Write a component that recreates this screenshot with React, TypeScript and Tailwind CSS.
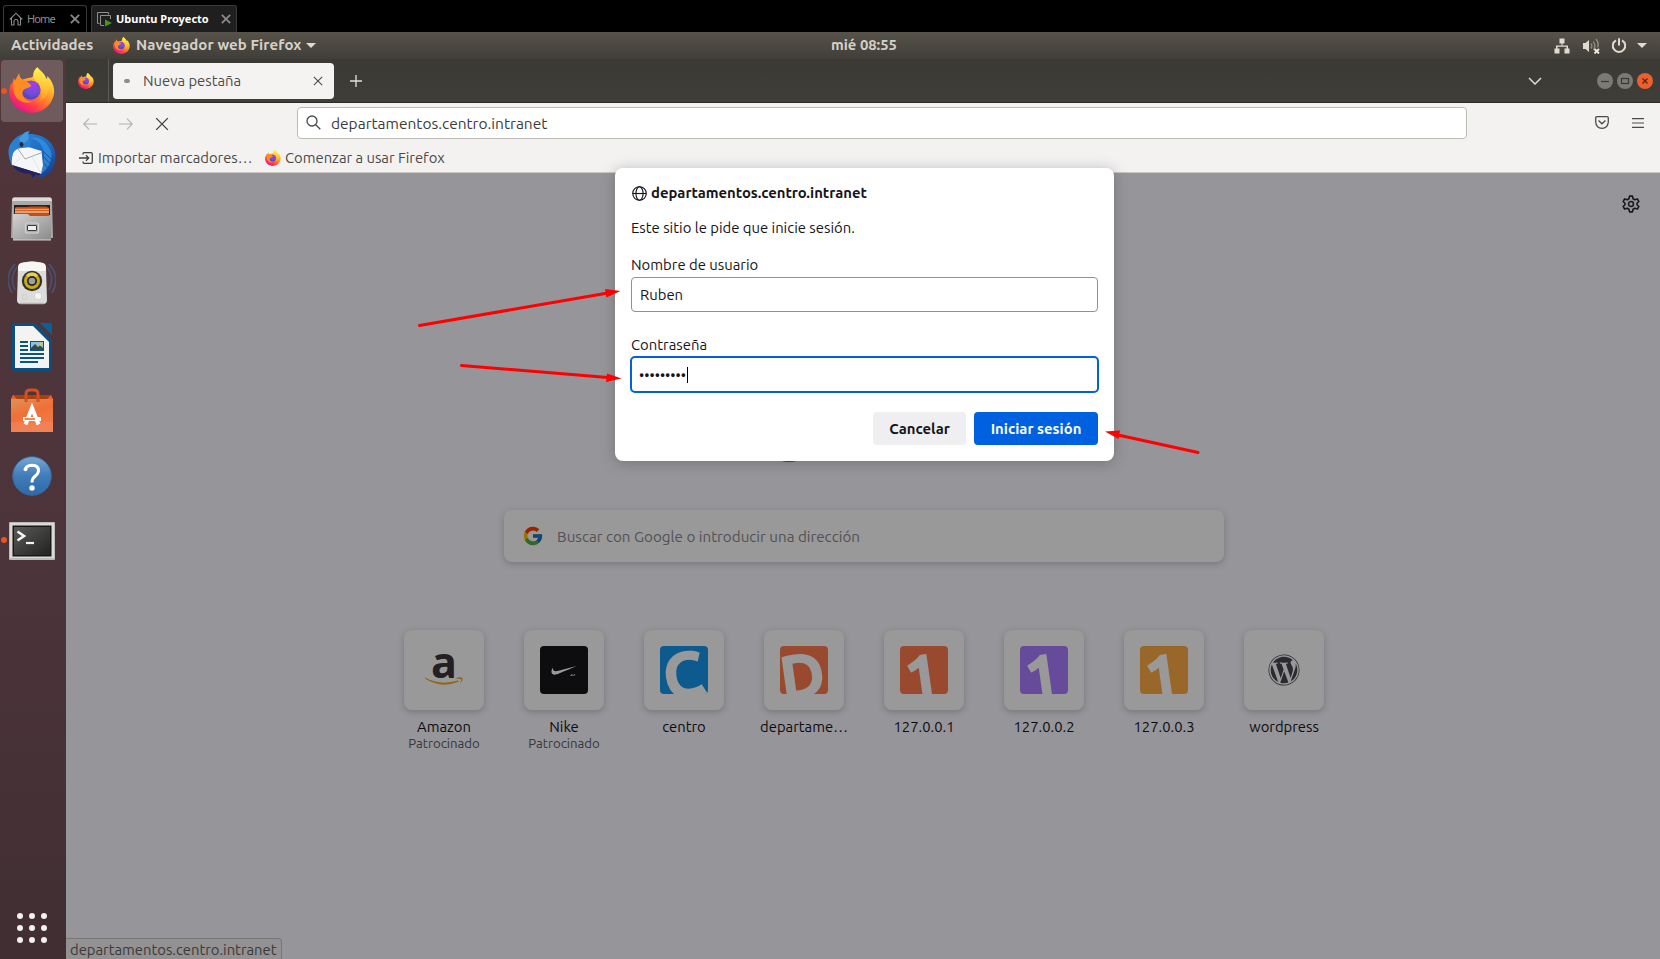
import React from "react";
import { FaWordpress } from "react-icons/fa";
import { FcGoogle } from "react-icons/fc";

function FirefoxLogo({ className, id }: { className: string; id: string }) {
  return (
    <svg viewBox="0 0 46 46" className={className}>
      <defs>
        <linearGradient id={id + "b"} x1="0.85" y1="0.1" x2="0.25" y2="0.95">
          <stop offset="0" stopColor="#fff04a" />
          <stop offset="0.3" stopColor="#ffb52e" />
          <stop offset="0.55" stopColor="#ff7a2c" />
          <stop offset="0.8" stopColor="#ff3750" />
          <stop offset="1" stopColor="#e8158c" />
        </linearGradient>
        <radialGradient id={id + "g"} cx="0.6" cy="0.25" r="0.8">
          <stop offset="0" stopColor="#a83be8" />
          <stop offset="0.6" stopColor="#6a50d8" />
          <stop offset="1" stopColor="#4a3fb0" />
        </radialGradient>
        <linearGradient id={id + "f"} x1="0.5" y1="0" x2="0.5" y2="1">
          <stop offset="0" stopColor="#fff250" />
          <stop offset="1" stopColor="#ffb02e" stopOpacity="0.4" />
        </linearGradient>
      </defs>
      <path
        d="M28.300 .3C31 4 35.500 5.500 37.500 12.500C38 11 38.500 10.500 38.300 9C42 12.500 45.200 18 45.200 24.500C44.500 37 34.500 45.800 22.500 45.800C10 45.800 .5 36.500 .2 24.500C.2 20.500 1.500 17.500 2.500 15.500L2.500 18L5 10.700L6 13.500C7.500 11.500 8.500 9 10.200 6.300C10.200 9.500 11.500 11.500 13.500 12.500C18 10.500 25 11.500 24 8C24.500 4.500 26 2 28.300 .3Z"
        fill={`url(#${id}b)`}
      />
      <path d="M28.300 .3C32 5 37 8 39.500 17C41 26 36 33 30 34C34 28 33 20 28 15C24 12 23.500 5 28.300 .3Z" fill={`url(#${id}f)`} />
      <circle cx="22" cy="23" r="9.600" fill={`url(#${id}g)`} />
      <path
        d="M5.500 13.500C9 12 12 12 14.500 13.500C17.500 14 20 16 22.500 18.500C21 20.500 18 21 16 22C13.500 23 13.500 25.500 13.500 27.500C14.500 32 19 35 24 34C18 38 8 35 5 26C4 21 4 17 5.500 13.500Z"
        fill="#ff8c22"
      />
    </svg>
  );
}

function Thunderbird() {
  return (
    <svg viewBox="0 0 48 48" className="size-12">
      <defs>
        <linearGradient id="tb" x1="0.2" y1="0" x2="0.8" y2="1">
          <stop offset="0" stopColor="#2f86d6" />
          <stop offset="0.5" stopColor="#1c6bc4" />
          <stop offset="1" stopColor="#173f96" />
        </linearGradient>
      </defs>
      <path d="M1 17C3 10 9 5 15 3C18 0 20 0 21.500 .8L19.500 3C36 2 47.500 12 47.500 25C47.500 37 41 44 32 47L29 43.500L25 47.500L24 43L5 36C1 30 0 23 1 17Z" fill="url(#tb)" />
      <path d="M22 7C33 9 39 19 35 33L33 43C40 38 44 31 43.500 22C40 11 31 5 22 7Z" fill="#3b9ae0" opacity="0.65" />
      <path d="M6 14L22 16.500L33.500 20L35 34L33 43L4 34C3 28 5 20 8 15Z" fill="#f6f6f8" />
      <path d="M8 15L17 28L34 21.500" fill="none" stroke="#a8a8ae" strokeWidth="1" />
      <path d="M4 34L13 27M33 42L24 26" stroke="#e0e0e4" strokeWidth="0.8" />
      <path d="M1 17C3 10 10 5 16 3C22 6 26 12 21 16C15 18 9 15 4.500 23C4 26 4 29 3 31C1 26 0 22 1 17Z" fill="#2a7fd0" />
      <path d="M21.500 .8C18 .2 14 3 11 8L14 14C18 11 23 8 20 3Z" fill="#3f9adf" />
      <path d="M4 34L33 43L31 44.500L28 43.500L25 47L23 43L15 42C10 40 6 38 4 34Z" fill="#25205e" />
      <ellipse cx="13.500" cy="13.500" rx="2" ry="2.400" fill="#2b2b38" />
      <path d="M35 20L46 31M36 26L45 36M36 32L42 40" stroke="#174c9c" strokeWidth="0.9" />
    </svg>
  );
}

function Files() {
  return (
    <svg viewBox="0 0 48 48" className="size-12">
      <defs>
        <linearGradient id="fl" x1="0" y1="0" x2="1" y2="1">
          <stop offset="0" stopColor="#d2d2d2" />
          <stop offset="1" stopColor="#8a8a8a" />
        </linearGradient>
      </defs>
      <path d="M4 5Q4 2 7 2H41Q44 2 44 5L45 43H3Z" fill="#a9a9a9" />
      <path d="M5 3H43L44 6H4Z" fill="#dcdcdc" />
      <path d="M6 10H42V20H6Z" fill="#2d211e" />
      <path d="M8 12H20L22 11.500H38L41 13V21H7V13Z" fill="#c34e14" />
      <path d="M7 14.500H41" stroke="#ff9c52" strokeWidth="1.300" />
      <path d="M7 17H41" stroke="#fff0df" strokeWidth="1" />
      <path d="M5 19H20L22 21H43V45H5Z" fill="url(#fl)" />
      <path d="M5 45H43" stroke="#d0d0d0" strokeWidth="1" />
      <rect x="17.500" y="28" width="13" height="10" rx="2" fill="#aaa" stroke="#d5d5d5" strokeWidth="1.200" />
      <rect x="19.500" y="30.500" width="9" height="5" rx="0.500" fill="#eee" stroke="#3c3c3c" strokeWidth="1" />
    </svg>
  );
}

function Rhythmbox() {
  return (
    <svg viewBox="0 0 48 48" className="size-12">
      <g fill="none" stroke="#49618f" strokeWidth="2" opacity="0.55">
        <path d="M7 4Q-5 17 4 33" />
        <path d="M9 7Q1 18 7 30" />
        <path d="M41 4Q53 17 44 33" />
        <path d="M39 7Q47 18 41 30" />
      </g>
      <path d="M13 3Q24 0 35 3Q38 4 38 8L39 40Q39 44 35 44H13Q9 44 9 40L10 8Q10 4 13 3Z" fill="#dcdcda" />
      <path d="M13 3Q24 0 35 3Q38 4 38 8V11H10V8Q10 4 13 3Z" fill="#f6f6f4" />
      <circle cx="24" cy="21" r="10.200" fill="#35322c" />
      <circle cx="24" cy="21" r="8" fill="#c9a716" />
      <path d="M18 15A8 8 0 0 1 30 15L24 21Z" fill="#e8d04a" />
      <circle cx="24" cy="21" r="5" fill="#222" />
      <circle cx="24" cy="21" r="3.300" fill="#9aa0a4" />
      <circle cx="30" cy="36" r="3.700" fill="#f4f4f4" stroke="#c4c4c4" strokeWidth="0.600" />
      <circle cx="16.500" cy="37" r="2.500" fill="none" stroke="#c8c8c8" strokeWidth="0.800" />
      <path d="M12 43.500H36" stroke="#b5b5b2" strokeWidth="1.500" />
    </svg>
  );
}

function Writer() {
  return (
    <svg viewBox="0 0 48 48" className="mb-px size-12">
      <path d="M6 0H27L44 17V46Q44 48 42 48H6Q4 48 4 46V2Q4 0 6 0Z" fill="#0a4f80" />
      <path d="M32 0H42Q44 0 44 2V12Z" fill="#0b609c" />
      <path d="M7 3H25L41 19V45H7Z" fill="#f3f3f2" />
      <g fill="#0a5384">
        <path d="M12 18H20V20H12ZM12 22H20V24H12ZM12 26H20V28H12ZM12 30H36V32H12ZM12 34H36V36H12ZM12 38H30V40H12Z" />
        <path d="M22 18H36V28H22Z" />
      </g>
      <path d="M23 19H35V27H23Z" fill="#8fc0dc" />
      <path d="M23 25L27 21L30 24L32 22.500L35 25V27H23Z" fill="#334a50" />
      <circle cx="33" cy="21" r="1.700" fill="#e7c547" />
    </svg>
  );
}

function Software() {
  return (
    <svg viewBox="0 0 48 48" className="mb-[2px] size-12">
      <defs>
        <linearGradient id="sw" x1="0" y1="0" x2="0.4" y2="1">
          <stop offset="0" stopColor="#e0905a" />
          <stop offset="0.5" stopColor="#ef7036" />
          <stop offset="1" stopColor="#f07c4c" />
        </linearGradient>
      </defs>
      <path d="M5 8H43L45 12H3Z" fill="#a8400f" />
      <path d="M5 8L9 12H3ZM43 8L39 12H45Z" fill="#e8602a" />
      <path d="M3 12H45V45H3Z" fill="url(#sw)" />
      <path d="M3 35H45V45H3Z" fill="#f58a60" opacity="0.45" />
      <path d="M18 15V7Q18 3 22 3H26Q30 3 30 7V15" fill="none" stroke="#d64f1d" strokeWidth="3" />
      <path d="M17.500 37.500L24 21L30.500 37.500" fill="none" stroke="#fff" strokeWidth="4" />
      <path d="M15 30H33V34H15Z" fill="#fff" />
      <path d="M16.500 31.200H27V32.800H16.500Z" fill="#ef6c22" />
    </svg>
  );
}

function Help() {
  return (
    <svg viewBox="0 0 48 48" className="size-12">
      <defs>
        <linearGradient id="hp" x1="0" y1="0" x2="0" y2="1">
          <stop offset="0" stopColor="#76a7d4" />
          <stop offset="0.5" stopColor="#3f7cb8" />
          <stop offset="1" stopColor="#2e6aa8" />
        </linearGradient>
      </defs>
      <circle cx="24" cy="24" r="19.300" fill="url(#hp)" stroke="#346ba2" strokeWidth="1" />
      <path d="M17.500 18Q17.500 13.500 24 13.300Q30.500 13.500 30.500 18.500Q30.500 21.500 27 24.200Q24 26.500 24 30.500" fill="none" stroke="#fff" strokeWidth="3" />
      <circle cx="17.500" cy="17.300" r="1.900" fill="#fff" />
      <circle cx="24" cy="36" r="2.700" fill="#fff" />
    </svg>
  );
}

function Terminal() {
  return (
    <svg viewBox="0 0 48 48" className="mt-px size-12">
      <defs>
        <linearGradient id="tm" x1="0" y1="0" x2="1" y2="1">
          <stop offset="0" stopColor="#5a5a58" />
          <stop offset="1" stopColor="#222" />
        </linearGradient>
      </defs>
      <rect x="1" y="5" width="46" height="38" rx="1" fill="#b9bbb8" />
      <rect x="2" y="6" width="44" height="35" fill="#dadbd8" />
      <rect x="4.500" y="8.500" width="39" height="31" fill="#181818" />
      <rect x="6" y="10" width="36" height="28" fill="url(#tm)" />
      <path d="M9.500 14.500L16 19L9.500 23.500" fill="none" stroke="#f4f4f4" strokeWidth="2.600" />
      <path d="M18 26H26" stroke="#f4f4f4" strokeWidth="2.200" />
    </svg>
  );
}

function CloseX({ className, w = 1 }: { className: string; w?: number }) {
  return (
    <svg viewBox="0 0 12 12" className={className} fill="none" stroke="currentColor" strokeWidth={w}>
      <path d="M1 1L11 11M11 1L1 11" />
    </svg>
  );
}

function VmTabs() {
  return (
    <div className="flex h-8 shrink-0 items-end gap-1 bg-black pl-[3px] font-['Noto_Sans',sans-serif]">
      <div className="flex h-[27px] w-[84px] items-center rounded-t-[3px] border border-b-0 border-[#3a3a3a] bg-black pl-[5px] text-[#8c8c8c]">
        <svg viewBox="0 0 14 14" className="size-[14px]" fill="none" stroke="#8a8a8a" strokeWidth="1.1">
          <path d="M.7 7.500L7 1.200L13.300 7.500M2.500 6V13H5V9Q5 7.500 7 7.500Q9 7.500 9 9V13H11.500V6" />
        </svg>
        <span className="ml-1 w-[43px] whitespace-nowrap text-[11px] tracking-[-0.9px]">Home</span>
        <CloseX className="size-[10px] text-[#8a8a8a]" w={2.2} />
      </div>
      <div className="flex h-[27px] w-[146px] items-center rounded-t-[3px] border border-b-0 border-[#3a3a3a] bg-[#1f1f1f] pl-[5px]">
        <svg viewBox="0 0 15 15" className="size-[15px]" fill="none" stroke="#8f8f8f" strokeWidth="1">
          <path d="M2.500 11.500H.5V.5H11.500V2.500M7 13.500H3.500V3.500H13.500V7" />
          <path d="M8 7.500L15 11L8 14.500Z" fill="#3f9a12" stroke="none" />
        </svg>
        <span className="ml-1 w-[105px] whitespace-nowrap text-[11px] font-bold text-white">Ubuntu Proyecto</span>
        <CloseX className="size-[10px] text-[#8a8a8a]" w={2.2} />
      </div>
    </div>
  );
}

function GnomeBar() {
  return (
    <div className="flex h-[27px] shrink-0 items-center bg-linear-to-b from-[#57534a] to-[#403e39] text-[15px] font-bold text-[#d5d1c9]">
      <span className="ml-[11px] w-[102px] whitespace-nowrap">Actividades</span>
      <FirefoxLogo id="top" className="size-[17px]" />
      <span className="ml-[6px] w-[170px] whitespace-nowrap tracking-[0.1px]">Navegador web Firefox</span>
      <svg viewBox="0 0 10 5" className="h-[5px] w-[10px]" fill="#dfdbd2"><path d="M0 0H10L5 5Z" /></svg>
      <span className="ml-[515px] w-[66px] whitespace-nowrap text-[14.800px]">mié 08:55</span>
      <svg viewBox="0 0 16 16" className="ml-auto size-4" fill="#dfdbd2">
        <path d="M5.500 .5H10.500V5.500H8.500V7.500H14V10.500H15.500V15.500H10.500V10.500H12.500V8.800H3.500V10.500H5.500V15.500H.5V10.500H2V7.500H7.500V5.500H5.500Z" />
      </svg>
      <svg viewBox="0 0 17 16" className="ml-[13px] h-4 w-[17px]" fill="#dfdbd2">
        <path d="M0 5H2.500L6 2V14L2.500 11H0Z" />
        <g fill="none" stroke="#8b8880" strokeWidth="1.500">
          <path d="M8 5.500Q9.500 8 8 10.500M10.500 3.500Q13 8 10.500 12M13 1Q16.500 5.500 14.500 9.500" />
        </g>
        <path d="M11.500 11L16 15.500M16 11L11.500 15.500" stroke="#efece5" strokeWidth="1.800" />
      </svg>
      <svg viewBox="0 0 16 16" className="ml-[11px] size-4" fill="none" stroke="#dfdbd2" strokeWidth="2">
        <path d="M5 2.300A6.200 6.200 0 1 0 11 2.300M8 .3V7.500" />
      </svg>
      <svg viewBox="0 0 10 5" className="mr-[13px] ml-[10px] h-[5px] w-[10px]" fill="#dfdbd2"><path d="M0 0H10L5 5Z" /></svg>
    </div>
  );
}

function Dock() {
  const icons = [
    <FirefoxLogo key="f" id="dock" className="mb-[2px] size-[46px]" />,
    <Thunderbird key="t" />,
    <Files key="n" />,
    <Rhythmbox key="r" />,
    <Writer key="w" />,
    <Software key="s" />,
    <Help key="h" />,
    <Terminal key="c" />,
  ];
  return (
    <div className="flex w-[66px] shrink-0 flex-col bg-linear-to-b from-[#51363b] via-[#4b343a] via-60% to-[#402e32]">
      {icons.map((icon, i) => (
        <div key={i} className="relative flex h-[64.2px] w-16 items-center justify-center">
          {i === 0 && <div className="absolute top-px left-px size-[62px] rounded-[4px] bg-[#6f5a5d]" />}
          <div className="relative">{icon}</div>
          {(i === 0 || i === 7) && <div className="absolute top-[29px] left-px size-[6px] rounded-full bg-[#e95420]" />}
        </div>
      ))}
      <div className="mt-auto mb-[16px] ml-[17px] grid w-[30px] grid-cols-3 gap-[6px]">
        {Array.from({ length: 9 }, (_, i) => (
          <div key={i} className="size-[6px] rounded-full bg-[#f2f0f0]" />
        ))}
      </div>
    </div>
  );
}

function TabStrip() {
  return (
    <div className="flex h-11 shrink-0 items-center border-b border-[#2b2a27] bg-linear-to-b from-[#3a3934] to-[#3f3e39]">
      <FirefoxLogo id="pin" className="ml-3 size-4" />
      <div className="ml-[14px] h-full w-px bg-[#5b5a55]" />
      <div className="ml-1 flex h-9 w-[221px] items-center rounded-[4px] bg-[#f4f3f2] text-[14.800px] text-[#4c4c4c]">
        <div className="ml-[11px] h-[4px] w-[6px] rounded-full bg-[#8e8e8e]" />
        <span className="ml-[13px] w-[170px] pt-[2px] whitespace-nowrap">Nueva pestaña</span>
        <CloseX className="size-[10px] text-[#4c4c4c]" w={1.3} />
      </div>
      <svg viewBox="0 0 12 12" className="ml-4 size-3" stroke="#e2e0dc" strokeWidth="1.3"><path d="M6 0V12M0 6H12" /></svg>
      <svg viewBox="0 0 14 8" className="ml-auto h-2 w-[14px]" fill="none" stroke="#dfdbd2" strokeWidth="1.5"><path d="M1 1L7 7L13 1" /></svg>
      <div className="mr-[7px] ml-[55px] flex gap-1">
        <svg viewBox="0 0 16 16" className="size-4"><circle cx="8" cy="8" r="8" fill="#7b7a74" /><path d="M4 8.500H12" stroke="#3a3934" strokeWidth="1.2" /></svg>
        <svg viewBox="0 0 16 16" className="size-4"><circle cx="8" cy="8" r="8" fill="#7b7a74" /><rect x="4.500" y="5.500" width="7" height="5" fill="none" stroke="#3a3934" strokeWidth="1.200" /></svg>
        <svg viewBox="0 0 16 16" className="size-4"><circle cx="8" cy="8" r="8" fill="#ec5f2f" /><path d="M5.500 5.500L10.500 10.500M10.500 5.500L5.500 10.500" stroke="#5e2312" strokeWidth="1.300" /></svg>
      </div>
    </div>
  );
}

function Toolbar() {
  return (
    <div className="flex h-[70px] shrink-0 flex-col border-b border-[#c9c6c3] bg-[#f3f2f1] text-[14.800px] text-[#4a4a4a]">
      <div className="flex h-10 items-center">
        <svg viewBox="0 0 14 12" className="mt-[2px] ml-[17px] h-3 w-[14px]" fill="none" stroke="#b3b2b1" strokeWidth="1.200"><path d="M14 6H.8M6 .7L.8 6L6 11.300" /></svg>
        <svg viewBox="0 0 14 12" className="mt-[2px] ml-[22px] h-3 w-[14px]" fill="none" stroke="#b3b2b1" strokeWidth="1.200"><path d="M0 6H13.200M8 .7L13.200 6L8 11.300" /></svg>
        <CloseX className="mt-[2px] ml-[22px] size-[14px] text-[#3b3b3b]" w={1.1} />
        <div className="ml-[128px] flex h-8 w-[1170px] items-center rounded-[4px] border border-[#bdbbb8] bg-white">
          <svg viewBox="0 0 15 15" className="ml-2 size-[15px]" fill="none" stroke="#4a4a4a" strokeWidth="1.300"><circle cx="6" cy="6" r="5" /><path d="M9.700 9.700L14.300 14.300" /></svg>
          <span className="ml-[10px] pt-[2px] text-[15.500px] whitespace-nowrap text-[#3b3b3b]">departamentos.centro.intranet</span>
        </div>
        <svg viewBox="0 0 14 13" className="ml-auto h-[13px] w-[14px]" fill="none" stroke="#4a4a4a" strokeWidth="1.300"><path d="M.7 2Q.7 .7 2 .7H12Q13.300 .7 13.300 2V6Q12.800 12.300 7 12.300Q1.200 12.300 .7 6ZM3.500 4.500L7 7.800L10.500 4.500" /></svg>
        <svg viewBox="0 0 12 10" className="mr-4 ml-[23px] h-[10px] w-3" stroke="#4a4a4a" strokeWidth="1.200"><path d="M0 .6H12M0 5H12M0 9.400H12" /></svg>
      </div>
      <div className="flex h-[30px] items-center pt-px whitespace-nowrap">
        <svg viewBox="0 0 14 12" className="ml-[13px] h-3 w-[14px]" fill="none" stroke="#3f3f3f" strokeWidth="1.300"><path d="M4 2.500V2Q4 .7 5.300 .7H12Q13.300 .7 13.300 2V10Q13.300 11.300 12 11.300H5.300Q4 11.300 4 10V9.500M0 6H9.500M7 3.300L9.700 6L7 8.700" /></svg>
        <span className="ml-[5px] w-[167px]">Importar marcadores…</span>
        <FirefoxLogo id="bm" className="size-4" />
        <span className="ml-1">Comenzar a usar Firefox</span>
      </div>
    </div>
  );
}

const tile = "relative size-12 overflow-hidden rounded-[4px]";
const glyph = "absolute rotate-[-8deg] leading-none font-bold text-white [-webkit-text-stroke:1.5px_white]";

function One() {
  return <span className={glyph + " top-[-1px] left-[5px] text-[60px]"}>1</span>;
}

function ShortcutIcon({ kind }: { kind: string }) {
  switch (kind) {
    case "amazon":
      return (
        <div className="relative flex size-12 justify-center">
          <span className="absolute top-[-14px] font-['Open_Sans',sans-serif] text-[43px] leading-[60px] font-bold text-[#3c3439]">a</span>
          <svg viewBox="0 0 38 9" className="absolute top-[31px] h-[9px] w-[38px]" fill="#f5a81c">
            <path d="M0 .5Q15 9 33 3.500L34 4.500Q16 12 0 1.500ZM30.500 1.500Q34 -.5 37.500 .8Q38 4 34.800 7Q36.500 3.500 36 2.200Q34 1.500 30.500 1.500Z" />
          </svg>
        </div>
      );
    case "nike":
      return (
        <div className="size-12 rounded-[4px] bg-[#161519]">
          <svg viewBox="0 0 48 48" className="size-12" fill="#fff">
            <path d="M12.800 21.500C10.500 25 11 29.500 16 28.500Q17.500 28.300 36.500 20L18.500 24.800C14.500 25.800 12.500 24.500 12.800 21.500Z" />
            <path d="M30 30L31.500 28H32.500V30ZM33 30L34 28H35L34.500 30Z" opacity="0.7" />
          </svg>
        </div>
      );
    case "c":
      return (
        <div className={tile + " bg-[#1697ee]"}>
          <span className={glyph + " top-[-4px] left-[3px] text-[63px]"}>C</span>
          <svg viewBox="0 0 6 9" className="absolute right-0 bottom-0 h-[9px] w-[6px]" fill="#fff"><path d="M0 0L6 9H0Z" /></svg>
        </div>
      );
    case "d":
      return <div className={tile + " bg-[#ff7c4e]"}><span className={glyph + " top-[-2px] left-0 text-[61px]"}>D</span></div>;
    case "1":
      return <div className={tile + " bg-[#ff7c4e]"}><One /></div>;
    case "2":
      return <div className={tile + " bg-[#a97dff]"}><One /></div>;
    case "3":
      return <div className={tile + " bg-[#ffac45]"}><One /></div>;
    default:
      return <FaWordpress className="size-8 text-[#464650]" />;
  }
}

const shortcuts = [
  { kind: "amazon", label: "Amazon", sponsored: true },
  { kind: "nike", label: "Nike", sponsored: true },
  { kind: "c", label: "centro" },
  { kind: "d", label: "departame…" },
  { kind: "1", label: "127.0.0.1" },
  { kind: "2", label: "127.0.0.2" },
  { kind: "3", label: "127.0.0.3" },
  { kind: "wp", label: "wordpress" },
];

function NewTab() {
  return (
    <div className="relative flex grow flex-col overflow-hidden bg-[#faf8ff]">
      <svg viewBox="0 0 24 24" className="mt-[22px] mr-[20px] size-[18px] self-end" fill="none" stroke="#2a2833" strokeWidth="2.1" strokeLinejoin="round">
        <path d="M10 1.500H14L14.700 5L17 6.300L20.500 5.200L22.500 8.700L20 11V13L22.500 15.300L20.500 18.800L17 17.700L14.700 19L14 22.500H10L9.300 19L7 17.700L3.500 18.800L1.500 15.300L4 13V11L1.500 8.700L3.500 5.200L7 6.300L9.300 5Z" />
        <circle cx="12" cy="12" r="3.300" />
      </svg>
      <div className="mt-[238px] ml-[711px] h-[11px] w-[24px] rounded-[50%] bg-[#d0306a]" />
      <div className="mt-[48px] ml-[438px] flex h-[52px] w-[720px] items-center rounded-lg bg-white shadow-[0_2px_6px_rgba(58,57,68,0.25)]">
        <FcGoogle className="ml-[18px] size-[22px]" />
        <span className="ml-[13px] pt-[2px] whitespace-nowrap text-[15.200px] text-[#8b8992]">Buscar con Google o introducir una dirección</span>
      </div>
      <div className="mt-[68px] ml-[318px] flex">
        {shortcuts.map((s) => (
          <div key={s.label} className="flex w-[120px] flex-col items-center">
            <div className="flex size-20 items-center justify-center rounded-lg bg-white shadow-[0_2px_6px_rgba(58,57,68,0.25)]">
              <ShortcutIcon kind={s.kind} />
            </div>
            <span className="mt-[7px] text-[14.800px] leading-5 whitespace-nowrap text-[#15141a]">{s.label}</span>
            {s.sponsored && <span className="text-[13.200px] leading-[13px] text-[#5b5b66]">Patrocinado</span>}
          </div>
        ))}
      </div>
      <div className="absolute inset-0 bg-black/40" />
      <div className="absolute bottom-0 left-0 h-[21px] w-[216px] rounded-tr-[4px] border-t border-r border-[#77767a] bg-[#939191] pl-1 text-[14.800px] leading-[22px] whitespace-nowrap text-[#3a393b]">
        departamentos.centro.intranet
      </div>
    </div>
  );
}

function LoginDialog() {
  return (
    <div className="absolute top-[168px] left-[615px] flex h-[293px] w-[499px] flex-col rounded-lg bg-white px-4 text-[14.850px] leading-5 whitespace-nowrap text-[#15141a] shadow-[0_2px_14px_rgba(58,57,68,0.35)]">
      <div className="mt-[15px] flex items-center font-bold">
        <svg viewBox="0 0 16 16" className="ml-px size-[15px]" fill="none" stroke="#15141a" strokeWidth="1.200"><circle cx="8" cy="8" r="7.200" /><ellipse cx="8" cy="8" rx="3.800" ry="7.200" /><path d="M.8 8H15.200" /></svg>
        <span className="ml-1">departamentos.centro.intranet</span>
      </div>
      <div className="mt-[15px]">Este sitio le pide que inicie sesión.</div>
      <div className="mt-[17px]">Nombre de usuario</div>
      <div className="mt-[2px] flex h-[35px] w-[467px] shrink-0 items-center rounded-[4px] border border-[#8f8f9d] pl-2">Ruben</div>
      <div className="mt-[23px]">Contraseña</div>
      <div className="mt-px -ml-px flex h-[37px] w-[469px] shrink-0 items-center rounded-[5px] border-2 border-[#0061e0] pl-[7px]">
        <span className="w-[48px] text-[14.500px]">•••••••••</span>
        <span className="h-4 w-px bg-black" />
      </div>
      <div className="mt-[19px] flex justify-end gap-2 font-bold">
        <button className="h-[33px] w-[93px] rounded-[4px] bg-[#efeff1]">Cancelar</button>
        <button className="h-[33px] w-[124px] rounded-[4px] bg-[#0061e0] text-[#fbfbfe]">Iniciar sesión</button>
      </div>
    </div>
  );
}

export default function App() {
  return (
    <div className="relative flex h-[959px] w-[1660px] flex-col overflow-hidden font-['Ubuntu','Noto_Sans',sans-serif]">
      <VmTabs />
      <GnomeBar />
      <div className="flex grow">
        <Dock />
        <div className="flex grow flex-col">
          <TabStrip />
          <Toolbar />
          <NewTab />
        </div>
      </div>
      <LoginDialog />
      <svg viewBox="0 0 1660 959" className="pointer-events-none absolute inset-0 h-[959px] w-[1660px]" fill="#f00" stroke="#f00">
        <path d="M419.500 325.500L608 293M461.500 365.500L608 377.500M1198 452.500L1118 435" strokeWidth="3" strokeLinecap="round" />
        <path d="M620.500 291L605 289L606.500 297.500ZM621.500 378.500L607 373.500L606 382ZM1105 431.500L1120 430.500L1118.500 439Z" stroke="none" />
      </svg>
    </div>
  );
}
